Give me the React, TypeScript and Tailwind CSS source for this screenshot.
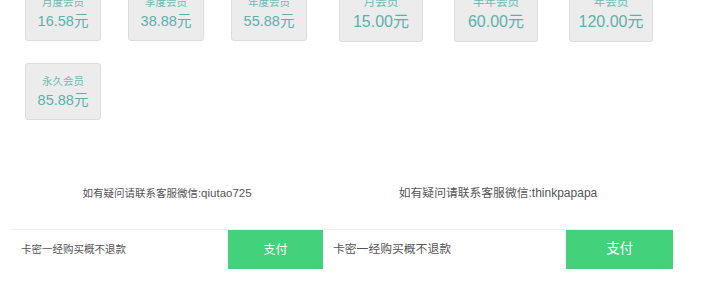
const leftPlans = [
  { name: "月度会员", price: "16.58元" },
  { name: "季度会员", price: "38.88元" },
  { name: "年度会员", price: "55.88元" },
  { name: "永久会员", price: "85.88元" },
];

const rightPlans = [
  { name: "月会员", price: "15.00元" },
  { name: "半年会员", price: "60.00元" },
  { name: "年会员", price: "120.00元" },
];

function PlanCard({ name, price, wide }: { name: string; price: string; wide?: boolean }) {
  return (
    <div
      className={`flex flex-col items-center justify-center rounded-[3px] border border-[#dcdcdc] bg-[#ececec] ${
        wide ? "h-[58px] w-[84px]" : "h-[57px] w-[76px]"
      }`}
    >
      <span className={`leading-[14px] text-[#6dbab5] ${wide ? "text-[11.5px]" : "text-[10.5px]"}`}>{name}</span>
      <span className={`mt-[3px] leading-[19px] text-[#5cb1ac] ${wide ? "text-[16px]" : "text-[14.5px]"}`}>
        {price}
      </span>
    </div>
  );
}

function PayBar({ wide }: { wide?: boolean }) {
  return (
    <div className="flex h-[40px] border-t border-[#f0f0f0]">
      <div className={`flex flex-1 items-center pl-[10px] text-[#555] ${wide ? "text-[11.8px]" : "text-[10.5px]"}`}>
        卡密一经购买概不退款
      </div>
      <button className={`w-[30.5%] bg-[#43d17b] text-white ${wide ? "text-[13.5px]" : "text-[12px]"}`}>支付</button>
    </div>
  );
}

export default function App() {
  return (
    <div
      className="flex h-[295px] w-[724px] overflow-hidden bg-white"
      style={{ fontFamily: '"Liberation Sans", "Noto Sans CJK SC", sans-serif' }}
    >
      {/* left panel */}
      <div className="ml-[11px] flex w-[312px] flex-col">
        <div className="-mt-[16px] h-[201px]">
          <div className="grid grid-cols-[76px_76px_76px] gap-x-[27px] gap-y-[22px] pl-[14px]">
            {leftPlans.map((p) => (
              <PlanCard key={p.name} name={p.name} price={p.price} />
            ))}
          </div>
        </div>
        <p className="text-center text-[10.5px] leading-[16px] text-[#555]">
          如有疑问请联系客服微信<span className="text-[11.5px]">:qiutao725</span>
        </p>
        <div className="mt-[28px]">
          <PayBar />
        </div>
      </div>

      {/* right panel */}
      <div className="flex w-[350px] flex-col">
        <div className="-mt-[16px] h-[201px]">
          <div className="flex gap-x-[31px] pl-[16px]">
            {rightPlans.map((p) => (
              <PlanCard key={p.name} name={p.name} price={p.price} wide />
            ))}
          </div>
        </div>
        <p className="text-center text-[11.8px] leading-[16px] text-[#555]">
          如有疑问请联系客服微信<span className="text-[12px]">:thinkpapapa</span>
        </p>
        <div className="mt-[28px]">
          <PayBar wide />
        </div>
      </div>
    </div>
  );
}
